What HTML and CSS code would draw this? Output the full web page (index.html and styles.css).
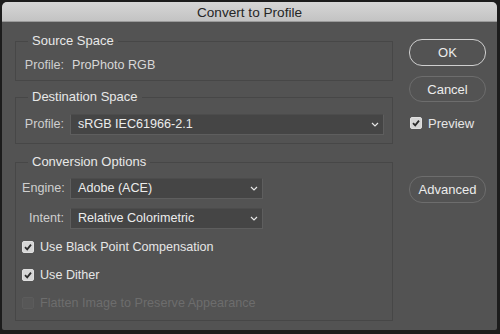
FILE: index.html
```html
<!DOCTYPE html>
<html>
<head>
<meta charset="utf-8">
<link rel="stylesheet" href="styles.css">
</head>
<body>
<div class="window">
  <div class="titlebar">Convert to Profile</div>
  <div class="content">
    <div class="groups">
      <fieldset class="group g-source">
        <legend>Source Space</legend>
        <div class="row">
          <span class="label">Profile:</span>
          <span class="value">ProPhoto RGB</span>
        </div>
      </fieldset>
      <fieldset class="group g-dest">
        <legend>Destination Space</legend>
        <div class="row">
          <span class="label">Profile:</span>
          <div class="select wide">
            <span>sRGB IEC61966-2.1</span>
            <svg class="chev" width="8" height="5" viewBox="0 0 8 5"><path d="M1 1 L4 4 L7 1" fill="none" stroke="#e6e6e6" stroke-width="1.2"/></svg>
          </div>
        </div>
      </fieldset>
      <fieldset class="group g-conv">
        <legend>Conversion Options</legend>
        <div class="row">
          <span class="label">Engine:</span>
          <div class="select narrow">
            <span>Adobe (ACE)</span>
            <svg class="chev" width="8" height="5" viewBox="0 0 8 5"><path d="M1 1 L4 4 L7 1" fill="none" stroke="#e6e6e6" stroke-width="1.2"/></svg>
          </div>
        </div>
        <div class="row">
          <span class="label">Intent:</span>
          <div class="select narrow">
            <span>Relative Colorimetric</span>
            <svg class="chev" width="8" height="5" viewBox="0 0 8 5"><path d="M1 1 L4 4 L7 1" fill="none" stroke="#e6e6e6" stroke-width="1.2"/></svg>
          </div>
        </div>
        <div class="row check-row first-check">
          <span class="box checked"><svg width="10" height="10" viewBox="0 0 10 10"><path d="M2 5.2 L4.2 7.4 L8 2.6" fill="none" stroke="#2b2b2b" stroke-width="1.8"/></svg></span>
          <span class="check-text">Use Black Point Compensation</span>
        </div>
        <div class="row check-row">
          <span class="box checked"><svg width="10" height="10" viewBox="0 0 10 10"><path d="M2 5.2 L4.2 7.4 L8 2.6" fill="none" stroke="#2b2b2b" stroke-width="1.8"/></svg></span>
          <span class="check-text">Use Dither</span>
        </div>
        <div class="row check-row disabled">
          <span class="box"></span>
          <span class="check-text">Flatten Image to Preserve Appearance</span>
        </div>
      </fieldset>
    </div>
    <div class="side">
      <div class="btn default">OK</div>
      <div class="btn">Cancel</div>
      <div class="preview">
        <span class="box checked"><svg width="10" height="10" viewBox="0 0 10 10"><path d="M2 5.2 L4.2 7.4 L8 2.6" fill="none" stroke="#2b2b2b" stroke-width="1.8"/></svg></span>
        <span class="check-text">Preview</span>
      </div>
      <div class="btn adv">Advanced</div>
    </div>
  </div>
</div>
</body>
</html>
```

FILE: styles.css
```css
* { box-sizing: border-box; }
html, body {
  margin: 0;
  padding: 0;
  background: #1c1c1c;
  width: 500px;
  height: 334px;
  overflow: hidden;
}
body {
  padding: 2px 3px 4px 2px;
  font-family: "Liberation Sans", Arial, sans-serif;
  font-size: 12.6px;
  color: #e2e2e2;
}
.window {
  height: 328px;
  background: #535353;
  border-radius: 5px 5px 2px 2px;
  overflow: hidden;
  display: flex;
  flex-direction: column;
}
.titlebar {
  height: 20px;
  flex: none;
  background: linear-gradient(#d6d6d6, #c3c3c3);
  border-bottom: 1px solid #9a9a9a;
  color: #262626;
  font-size: 13.6px;
  text-align: center;
  line-height: 21px;
}
.content {
  flex: 1;
  display: flex;
  padding-left: 13px;
}
.groups {
  width: 378px;
  padding-top: 11px;
  display: flex;
  flex-direction: column;
}
.group {
  margin: 0;
  border: 1px solid #474747;
  padding: 0 6px;
  min-width: 0;
}
.group legend {
  font-size: 13px;
  line-height: 16px;
  padding: 0 4px;
  margin-left: 6px;
  color: #e8e8e8;
}
.g-source { padding-bottom: 5px; }
.g-source .row { margin-top: 6px; height: 20px; }
.g-dest { margin-top: 8px; padding-bottom: 8px; }
.g-dest .row { margin-top: 8px; height: 22px; }
.g-conv { margin-top: 10px; padding-bottom: 7px; }
.g-conv .row { height: 22px; margin-top: 8px; }
.g-conv .row:first-of-type { margin-top: 7px; }
.g-conv .check-row { height: 20px; }
.g-conv .first-check { margin-top: 8px; }
.row {
  display: flex;
  align-items: center;
}
.label {
  width: 42px;
  text-align: right;
  color: #cfcfcf;
  margin-right: 6px;
  white-space: nowrap;
}
.value {
  margin-left: 2px;
  color: #d8d8d8;
}
.select {
  height: 21px;
  background: #454545;
  border: 1px solid #5e5e5e;
  border-top-color: #4c4c4c;
  display: flex;
  align-items: center;
  justify-content: space-between;
  padding: 0 4px 0 7px;
  color: #ececec;
}
.select.wide { width: 314px; }
.select.narrow { width: 193px; }
.chev { flex: none; }
.box {
  width: 12px;
  height: 12px;
  border-radius: 2px;
  flex: none;
  display: flex;
  align-items: center;
  justify-content: center;
  background: #575757;
  border: 1px solid #5c5c5c;
}
.box.checked {
  background: #d6d6d6;
  border-color: #e0e0e0;
}
.check-text {
  margin-left: 6px;
  color: #e6e6e6;
  white-space: nowrap;
}
.disabled .check-text { color: #6d6d6d; }
.side {
  margin-left: 16px;
  width: 77px;
  padding-top: 17px;
  display: flex;
  flex-direction: column;
}
.btn {
  height: 26px;
  border: 1px solid #6d6d6d;
  border-radius: 13px;
  display: flex;
  align-items: center;
  justify-content: center;
  color: #ececec;
  font-size: 13px;
}
.btn.default {
  height: 27px;
  border: 1.5px solid #cfcfcf;
}
.btn + .btn { margin-top: 10px; }
.preview {
  margin-top: 13px;
  display: flex;
  align-items: center;
  height: 16px;
  padding-left: 1px;
}
.preview .check-text { font-size: 13px; }
.btn.adv { margin-top: 45px; height: 27px; }
```
